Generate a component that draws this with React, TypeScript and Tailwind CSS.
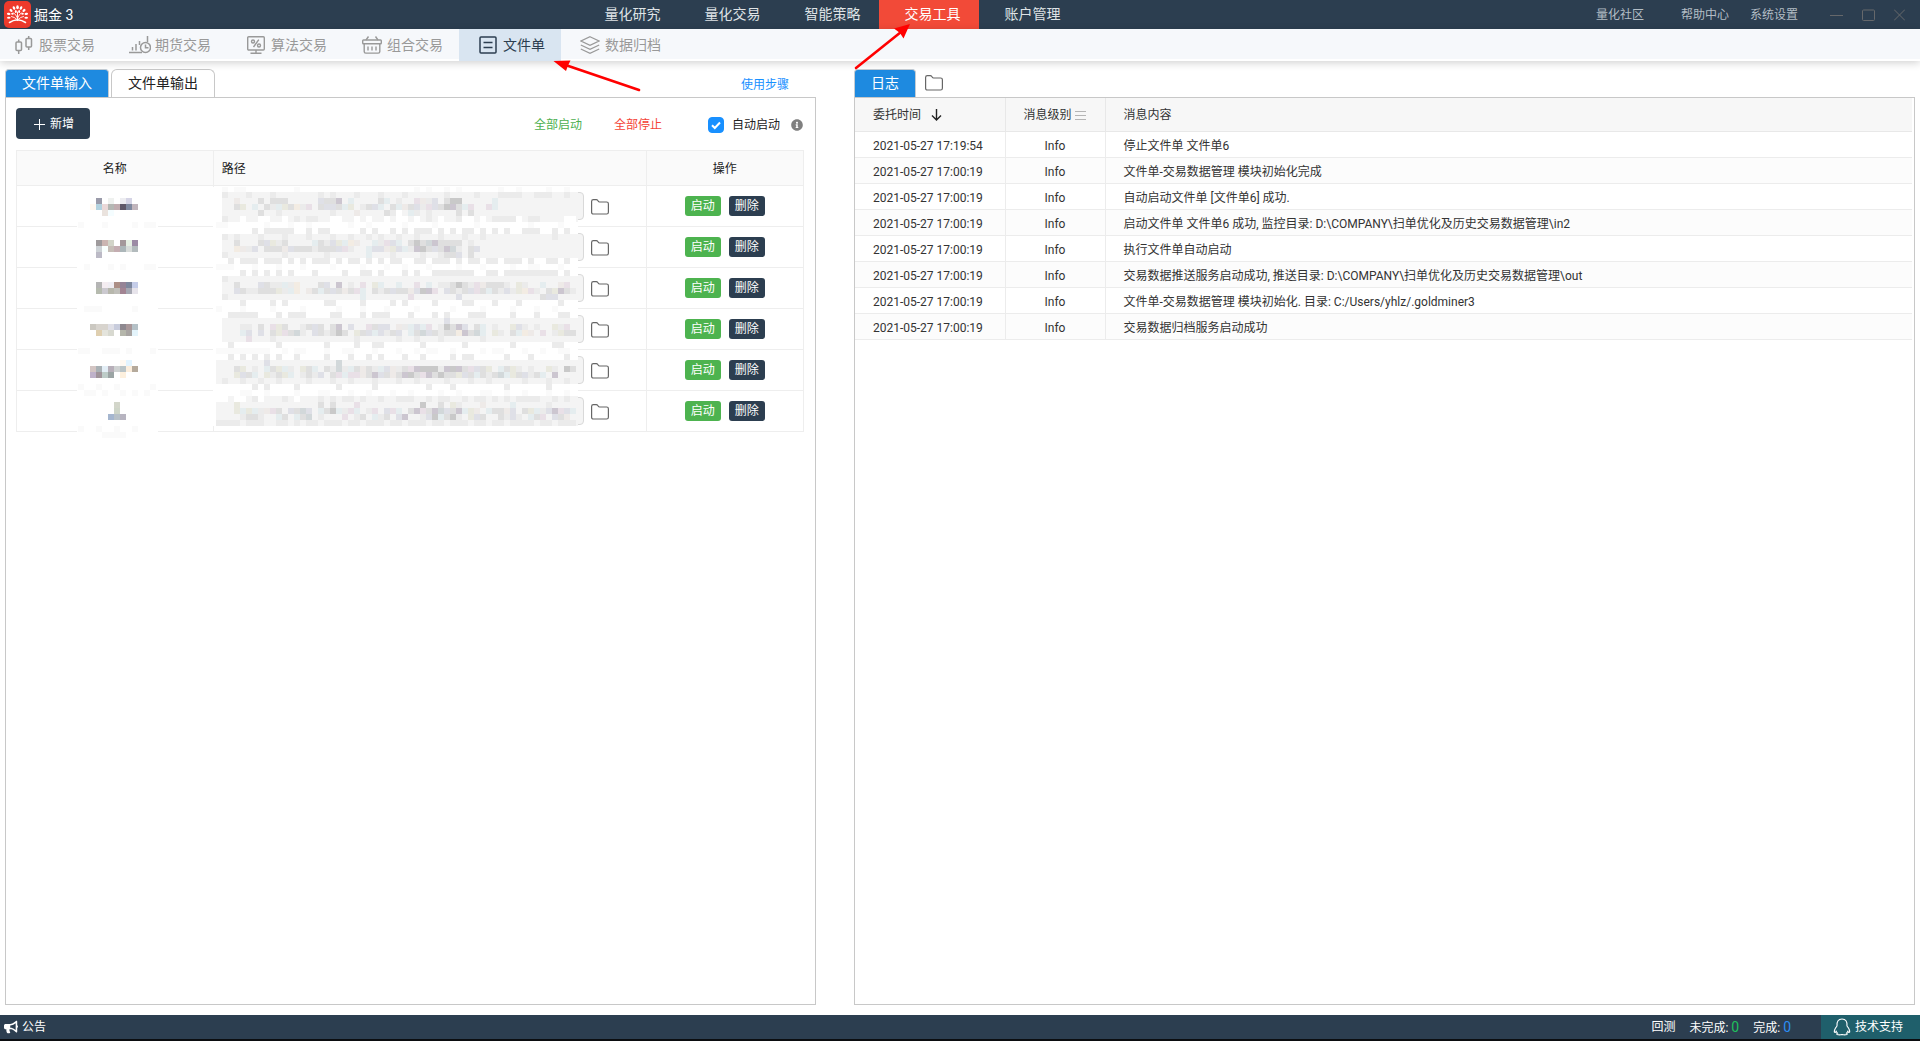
import React, { useState } from "react";
import { FaBullhorn, FaInfoCircle } from "react-icons/fa";

const MENU = ["量化研究", "量化交易", "智能策略", "交易工具", "账户管理"];

const LOGS = [
  { time: "2021-05-27 17:19:54", text: "停止文件单 文件单6" },
  { time: "2021-05-27 17:00:19", text: "文件单-交易数据管理 模块初始化完成" },
  { time: "2021-05-27 17:00:19", text: "自动启动文件单 [文件单6] 成功." },
  { time: "2021-05-27 17:00:19", text: "启动文件单 文件单6 成功, 监控目录: D:\\COMPANY\\扫单优化及历史交易数据管理\\in2" },
  { time: "2021-05-27 17:00:19", text: "执行文件单自动启动" },
  { time: "2021-05-27 17:00:19", text: "交易数据推送服务启动成功, 推送目录: D:\\COMPANY\\扫单优化及历史交易数据管理\\out" },
  { time: "2021-05-27 17:00:19", text: "文件单-交易数据管理 模块初始化. 目录: C:/Users/yhlz/.goldminer3" },
  { time: "2021-05-27 17:00:19", text: "交易数据归档服务启动成功" },
];

// Mosaic over the private names and paths, one character per 6px block
const COLORS: Record<string, string> = {
  w: "#ffffff",
  f: "#fafafa",
  l: "#ebebeb",
  m: "#dfdfdf",
  d: "#c9c9c9",
  k: "#ccc6d0",
  p: "#e9e0e7",
  e: "#dfe0e7",
  o: "#f3ece3",
  r: "#eeeae8",
  t: "#e5edef",
  y: "#e9e9df",
  c: "#d2d8da",
};

const PATH_MOSAIC = [
  ".f.ff........f...................f.f..f.f......f..f....f..f.",
  ".l...l...l.......l.l...l...l...l......l....l...llll..lll..l.",
  "...r...m.mmm.....emmk.t....mt.l..prle.mdd.....t.............",
  "w..my.t.mltymolp.meemty.lmet.mtrmelpemdkmtp..pt.............",
  ".......m..l........l...r....mlw.tl.l....m.m.................",
  ".l..w..ww..w.l.ll..ww..w.w..w.ww.w.l.w..lww.w.llllw.ll....ww",
  "ff......f...f..f......f..f.....f....f......f........f....f..",
  "......l.lllll..l.ll.....l.l..l.l.lll.l.l.ll.l.l.l..lll..l.l.",
  ".l.l...l...l...l...l..l..l.l..l..l...l...l..l...........l...",
  "...m...meylm....tmleytor..tlpet.mdmckmmmm.l.................",
  "...orle.mmmremmmlmmmepl..teeryetlkdmemkcl.me.................",
  ".l.........l......l......t...l....l..lmme.m.................",
  "..l.lll.lll.l.l.lll.l.ll.l.l.ll..ll.lll.l.ll.ll.lll.l..ll.l.",
  "fff...f...f...f....f....f...f..f...f....f...f....f..ff...f..",
  "....l.l.l.l.l...l....l..ll.l...l.l..lllllll..ll.lllllllll.l.",
  ".l..........................................................",
  "...m...emlltlo...me.k.l.p.yt..t..p.t.llmdmlprmmml.yl..t..rp.",
  "...emllmmmylto.rmtmemrmpt.mlmemmredkp.emlmepmtmlelyopl.mykml.",
  ".l......................t.......p.......e.............mee...",
  ".ww.l.ww.l.lww..w.ll.ww.l.ww.l.l.ww.l.ww.ll.w.lww.l.w.ww.l.w",
  "f...f....f....f.....f...f...f....f.....f....f....f...f..f...",
  "..lllll.w.l.lll.ww.ll.w.l.lll.w.l.w.l.l.w.lll.ww.l.w.l.w.ll.",
  "......................................e.....................",
  "....ll.m.pym..lmem.mk.e..pmee.rltetp.ldmke.mt.l..yel.l..ylp.",
  "....te.e.mypmcl.emlmdm.ymetelme.tmcemlmmokmct.yl.mtor.p.lymm",
  ".....p...l.............l......l..l...l......l...............",
  ".wl.www..wl.w..ww.l.ww.lw.ll.w.ww.l.w.ww.l.w.www.l.w.ww.ll.w",
  "fffffffff..f.ff...f..ff...f...f..f.ff..f....f.ff...f..f..ff.",
  "..l.lwl.l.lw.l.w..l.w.l..lwl.w.l..l.w..l.ll.w.w.l..wl..ww.l.",
  "........e...........c.......................................",
  "...my.l.tmytl.ymt.mlcltmrmlterlmpkdddlkdkmpemy.tmyl.l..yl.dm",
  "...yemt.ylmyt.lmle.mptpprmkemrmkdmpkmdmmyemtmlmctymelmt.k...",
  ".l..l..l..l....l...l..l...l...l..l....l...l..l.....l...l..l.",
  "w.w.wwl.l.w.wl.ww.w.lw.w.wl.w.w.w.wl.w.l.w.w.ww.l.w.ww.l.ww.",
  "....ff..f....f...ff...f..f...f..f....f..f...ff..f..f...f..f.",
  "ww.ww.lw...l.w...l.l.ll.l..l..lll..l.ll..l.ll.l.l.llll..l.l.",
  "...y.............m.m...p..........d..m.yl...r....t.....l....",
  "...ytytlrpm.emce.tmdtlpt.lp.ept.mkpmkcemktyr.tmmre.mytlekpet",
  "....lmml..tm.tmc.l...p.lm.tlm.ek..ledtmdl.yem..mlel.tmp.emr.",
  "llll.lll..ll.l.ll.lll.ll.lll.ll.lll.ll.lll.ll.ll.llll.ll.lll",
];

// [column, row, color]
const NAME_MOSAIC: [number, number, string][] = [
  [1, 2, "#9a9baa"], [3, 2, "#eff1ef"], [5, 2, "#ededf1"], [6, 2, "#d5d4e5"],
  [0, 3, "#fff8f0"], [1, 3, "#b3d2df"], [2, 3, "#ead8d8"], [3, 3, "#b4b7b3"], [4, 3, "#c0acaf"], [5, 3, "#5f5868"], [6, 3, "#7e889e"], [7, 3, "#c1b5bc"],
  [2, 4, "#eae3de"], [3, 4, "#f5fdff"],
  [1, 9, "#9e9a9c"], [2, 9, "#cbb5b1"], [3, 9, "#d2d4c8"], [5, 9, "#a4989b"], [6, 9, "#e6f0e4"], [7, 9, "#9c8ba5"],
  [1, 10, "#cdd2d6"], [2, 10, "#f9fffd"], [3, 10, "#c6beb7"], [4, 10, "#c4adb1"], [5, 10, "#acb6b9"], [6, 10, "#d8dcda"], [7, 10, "#b3bbbd"],
  [1, 11, "#bcbac6"],
  [1, 16, "#b5b5b5"], [2, 16, "#f4edf1"], [3, 16, "#efedf3"], [4, 16, "#ac8f86"], [5, 16, "#958396"], [6, 16, "#7d879d"], [7, 16, "#c5cde9"],
  [1, 17, "#b6bbaf"], [2, 17, "#cbc9cf"], [3, 17, "#b7b7ac"], [4, 17, "#c0bfba"], [5, 17, "#a28493"], [6, 17, "#a5a7b2"], [7, 17, "#e7e4eb"],
  [0, 23, "#cbc8c1"], [1, 23, "#d8d4ce"], [2, 23, "#d8d4ce"], [3, 23, "#dfdfe6"], [4, 23, "#c8ccdc"], [5, 23, "#8e888f"], [6, 23, "#a99799"], [7, 23, "#b5c1c7"],
  [1, 24, "#dfcfb0"], [2, 24, "#e4e4dc"], [3, 24, "#d8d9d0"], [5, 24, "#b5b6ab"], [6, 24, "#a8a4a2"], [7, 24, "#e4f4fb"],
  [5, 29, "#fff9f2"], [6, 29, "#e3f4ff"],
  [0, 30, "#d3c5c3"], [1, 30, "#a9b1b5"], [2, 30, "#e3eef6"], [3, 30, "#b7afb9"], [4, 30, "#cfd2d2"], [5, 30, "#bac4c7"], [6, 30, "#fceedd"], [7, 30, "#b5aa9c"],
  [0, 31, "#bfb2ca"], [1, 31, "#a0949a"], [2, 31, "#bdccc8"], [3, 31, "#9ba4a4"], [5, 31, "#fdf0de"],
  [4, 36, "#d3d6ca"], [4, 37, "#ced5c8"], [3, 38, "#a5b6cf"], [4, 38, "#b8c1c8"], [5, 38, "#b7b4c0"],
  [-2, 6, "#fafafa"], [2, 6, "#fafafa"], [7, 6, "#fafafa"], [9, 6, "#fafafa"], [10, 6, "#fafafa"],
  [-1, 13, "#fafafa"], [3, 13, "#fafafa"], [5, 13, "#fafafa"], [9, 13, "#fafafa"], [10, 13, "#fafafa"],
  [-1, 20, "#fafafa"], [0, 20, "#fafafa"], [1, 20, "#fafafa"], [7, 20, "#fafafa"],
  [-2, 27, "#fafafa"], [-1, 27, "#fafafa"], [2, 27, "#fafafa"], [3, 27, "#fafafa"], [4, 27, "#fafafa"], [6, 27, "#fafafa"], [10, 27, "#fafafa"],
  [-2, 33, "#fafafa"], [1, 33, "#fafafa"], [4, 33, "#fafafa"], [10, 33, "#fafafa"],
  [-1, 34, "#fafafa"], [0, 34, "#fafafa"], [2, 34, "#fafafa"], [5, 34, "#fafafa"], [7, 34, "#fafafa"], [9, 34, "#fafafa"],
  [-2, 40, "#fafafa"], [1, 40, "#fafafa"], [4, 40, "#fafafa"], [7, 40, "#fafafa"], [2, 41, "#fafafa"], [3, 41, "#fafafa"], [4, 41, "#fafafa"], [5, 41, "#fafafa"],
];

// filled bands behind the path blocks: [x, first row, rows]
const BANDS = [
  [206, 1, 5],
  [206, 8, 4],
  [206, 15, 4],
  [206, 22, 4],
  [200, 29, 4],
  [200, 35, 5],
];

const Mosaic = () => (
  <svg className="absolute left-0 top-0 pointer-events-none" width="600" height="292" shapeRendering="crispEdges" aria-hidden="true">
    <rect x="61" y="38" width="81" height="250" fill="#fff" />
    {NAME_MOSAIC.map(([c, r, color], i) => (
      <rect key={i} x={74 + c * 6} y={36 + r * 6} width="6" height="6" fill={color} />
    ))}
    <rect x="197" y="37" width="365" height="239" fill="#fff" />
    {BANDS.map(([x, r, n], i) => (
      <rect key={i} x={x} y={36 + r * 6} width={562 - x} height={n * 6} fill="#f4f4f4" />
    ))}
    {PATH_MOSAIC.map((line, r) =>
      line.split("").map((ch, c) =>
        ch === "." ? null : <rect key={`${r}-${c}`} x={200 + c * 6} y={r === 0 ? 37 : 36 + r * 6} width="6" height={r === 0 ? 5 : 6} fill={COLORS[ch]} />
      )
    )}
  </svg>
);

const FolderIcon = () => (
  <svg width="18" height="16" viewBox="0 0 18 16" fill="none" stroke="#666" strokeWidth="1.2">
    <path d="M.6 13.2V2.4Q.6.6 2.4.6h2.8q1 0 1.6.9l.5.8q.4.7 1.3.7h7q1.8 0 1.8 1.8v8.4q0 1.8-1.8 1.8H2.4q-1.8 0-1.8-1.8z" />
  </svg>
);

const Logo = () => (
  <svg width="27" height="27" viewBox="0 0 27 27">
    <rect width="27" height="27" rx="5" fill="#ee3a2b" />
    <g stroke="#fff" fill="none" strokeLinecap="round">
      <path d="M13.5 19V11M13.5 17Q12.5 14 9.8 12M13.5 17Q14.5 14 17.2 12M13 18.5Q10.5 16 7.5 15.5M14 18.5Q16.500 16 19.5 15.5" strokeWidth=".9" />
      <path d="M5.500 21.500Q10.500 18.500 13.5 19.200Q16.500 18.500 21.500 21.500" strokeWidth="1.5" />
    </g>
    <g fill="#fff">
      <ellipse cx="13.500" cy="6.200" rx="1.300" ry="2" />
      <ellipse cx="10" cy="7" rx="1.200" ry="1.900" transform="rotate(-25 10 7)" />
      <ellipse cx="17" cy="7" rx="1.200" ry="1.900" transform="rotate(25 17 7)" />
      <ellipse cx="7" cy="9.400" rx="1.200" ry="1.800" transform="rotate(-45 7 9.400)" />
      <ellipse cx="20" cy="9.400" rx="1.200" ry="1.800" transform="rotate(45 20 9.400)" />
      <ellipse cx="11.800" cy="10.600" rx="1" ry="1.500" />
      <ellipse cx="15.200" cy="10.600" rx="1" ry="1.500" />
      <ellipse cx="4.700" cy="12.900" rx="1.800" ry="1.100" transform="rotate(15 4.700 12.900)" />
      <ellipse cx="22.300" cy="12.900" rx="1.800" ry="1.100" transform="rotate(-15 22.300 12.900)" />
      <ellipse cx="8.500" cy="12.700" rx="1.300" ry="1" />
      <ellipse cx="18.500" cy="12.700" rx="1.300" ry="1" />
      <ellipse cx="4.800" cy="16.800" rx="1.800" ry="1" />
      <ellipse cx="22.200" cy="16.800" rx="1.800" ry="1" />
    </g>
  </svg>
);

const CandleIcon = () => (
  <svg width="18" height="18" viewBox="0 0 18 18" fill="none" stroke="currentColor" strokeWidth="1.5">
    <rect x="1" y="6" width="5.5" height="8.5" rx="1" />
    <path d="M3.700 3.500V6M3.700 14.500V18M13.700 0v2.500M13.700 11v3" />
    <rect x="11" y="2.5" width="5.5" height="8.5" rx="1" />
  </svg>
);

const FuturesIcon = () => (
  <svg width="22" height="18" viewBox="0 0 22 18" fill="none" stroke="currentColor" strokeWidth="1.5">
    <path d="M0 16.500h13M3.500 11v3.500M7 8v6.500M10.500 5v4M18.500 0v6" />
    <circle cx="16.5" cy="11.5" r="5" />
    <path d="M16.500 8.500v3.300h3" />
  </svg>
);

const AlgoIcon = () => (
  <svg width="18" height="18" viewBox="0 0 18 18" fill="none" stroke="currentColor" strokeWidth="1.4">
    <rect x=".7" y=".7" width="16.6" height="13.3" rx="1" />
    <path d="M9 14v3M3.500 17.200h11M11.800 3.700L6.500 11" />
    <circle cx="6" cy="5.5" r="1.5" />
    <circle cx="12" cy="9.5" r="1.5" />
  </svg>
);

const BasketIcon = () => (
  <svg width="20" height="18" viewBox="0 0 20 18" fill="none" stroke="currentColor" strokeWidth="1.4">
    <rect x=".7" y="4" width="18.6" height="3.8" rx=".8" />
    <path d="M2.200 8v7.500q0 1.600 1.600 1.600h12.400q1.600 0 1.600-1.600V8M6.500.5L4 4M13.500.5L16 4M6 10.500v4M10 10.500v4M14 10.500v4" />
  </svg>
);

const FileIcon = () => (
  <svg width="18" height="18" viewBox="0 0 18 18" fill="none" stroke="currentColor" strokeWidth="1.5">
    <rect x="1" y="1" width="16" height="16" rx="1" />
    <path d="M4.500 6.500h9M4.500 11.500h9" />
  </svg>
);

const LayersIcon = () => (
  <svg width="20" height="18" viewBox="0 0 20 18" fill="none" stroke="currentColor" strokeWidth="1.2">
    <path d="M10 .7L19 5l-9 4.300L1 5zM.8 9L10 13.300 19.200 9M.8 13L10 17.300 19.200 13" />
  </svg>
);

const QQIcon = () => (
  <svg width="18" height="18" viewBox="0 0 18 18" fill="none" stroke="#fff" strokeWidth="1.1">
    <path d="M4 8Q3.500 1 9 1t5 7q3 3.500 2.700 6-.8 1-2-.6-.3 1-1.200 1.700 1 .5.5 1.400-2.500.8-5 0-2.500.8-5 0-.5-.9.5-1.400Q3.600 14.400 3.300 13.400 2.100 15 1.300 14 1 11.500 4 8z" />
  </svg>
);

const TOOLS = [
  { name: "股票交易", icon: <CandleIcon /> },
  { name: "期货交易", icon: <FuturesIcon /> },
  { name: "算法交易", icon: <AlgoIcon /> },
  { name: "组合交易", icon: <BasketIcon /> },
  { name: "文件单", icon: <FileIcon /> },
  { name: "数据归档", icon: <LayersIcon /> },
];

const Header = () => (
  <header className="flex h-[29px] shrink-0 items-center bg-[#2c3e50] text-[#dfe3e6]">
    <div className="flex flex-[575] items-center gap-[3px] pl-1">
      <Logo />
      <span className="text-[14px] leading-5 text-white">掘金 3</span>
    </div>
    <nav className="flex h-full">
      {MENU.map((item) => (
        <a
          key={item}
          href="#"
          className={`flex w-[100px] items-center pl-[25px] text-[14px] ${item === "交易工具" ? "bg-[#f24a38] text-white" : ""}`}
        >
          {item}
        </a>
      ))}
    </nav>
    <div className="flex flex-[825] items-center justify-end pr-[15px] text-[12px] text-[#b3bdc5]">
      <a href="#" className="mr-[37px]">量化社区</a>
      <a href="#" className="mr-[21px]">帮助中心</a>
      <a href="#" className="mr-8">系统设置</a>
      <div className="flex items-center gap-[19px] text-[#66686b]">
        <button type="button" aria-label="最小化">
          <svg width="13" height="12" viewBox="0 0 13 12" stroke="currentColor"><path d="M0 6.500h13" /></svg>
        </button>
        <button type="button" aria-label="最大化">
          <svg width="13" height="12" viewBox="0 0 13 12" stroke="currentColor" fill="none"><rect x=".5" y="1" width="12" height="10.5" rx="1" /></svg>
        </button>
        <button type="button" aria-label="关闭">
          <svg width="11" height="12" viewBox="0 0 11 12" stroke="currentColor"><path d="M0 .5l11 11M11 .5l-11 11" /></svg>
        </button>
      </div>
    </div>
  </header>
);

const Toolbar = () => (
  <nav className="relative flex h-8 shrink-0 border-b-2 border-white bg-[#f6f8fb] shadow-[0_2px_8px_rgba(0,0,0,0.18)]">
    <div className="-mb-0.5 -ml-[5px] flex">
      {TOOLS.map((tool) => (
        <a
          key={tool.name}
          href="#"
          className={`flex items-center gap-1 pl-[18px] pr-4 text-[14px] ${tool.name === "文件单" ? "bg-[#d9e5f1] text-[#2c3e50]" : "text-[#999]"}`}
        >
          <span className="flex w-[22px] justify-center">{tool.icon}</span>
          {tool.name}
        </a>
      ))}
    </div>
  </nav>
);

const FilePanel = () => {
  const [autoStart, setAutoStart] = useState(true);

  return (
    <section className="flex flex-col">
      <div className="flex h-7 items-stretch gap-0.5 text-[14px]">
        <button type="button" className="rounded-t border border-b-0 border-[#c4ccd3] bg-[#1e8ae0] px-4 text-white">文件单输入</button>
        <button type="button" className="rounded-t-md border border-b-0 border-[#c8c8c8] bg-white px-4 text-[#222]">文件单输出</button>
        <a href="#" className="ml-auto mr-[27px] self-center pt-1 text-[12px] text-[#1890ff]">使用步骤</a>
      </div>
      <div className="flex-1 border border-[#c8c8c8] pl-2.5 pr-[11px] pt-2.5">
        <div className="flex items-center text-[12px]">
          <button type="button" className="flex h-[31px] w-[74px] items-center gap-[5px] rounded bg-[#2c3e50] pl-[18px] pt-px text-white">
            <svg width="11" height="11" viewBox="0 0 11 11" stroke="#fff"><path d="M0 5.500h11M5.500 0v11" /></svg>
            新增
          </button>
          <button type="button" className="ml-auto mr-8 pt-0.5 text-[#4caf50]">全部启动</button>
          <button type="button" className="mr-[46px] pt-0.5 text-[#f44336]">全部停止</button>
          <label className="relative mr-[11px] flex items-center gap-2 pt-0.5 text-[#222]">
            <input
              type="checkbox"
              checked={autoStart}
              onChange={(e) => setAutoStart(e.target.checked)}
              className="size-4 appearance-none rounded-sm border border-[#1890ff] checked:bg-[#1890ff]"
            />
            {autoStart && (
              <svg className="pointer-events-none absolute left-0 size-4" viewBox="0 0 16 16" fill="none" stroke="#fff" strokeWidth="2"><path d="M4 8.200l2.800 2.800L12 5.500" /></svg>
            )}
            自动启动
          </label>
          <FaInfoCircle className="mr-px mt-0.5 size-3 text-[#808080]" />
        </div>
        <div className="relative mt-[11px]">
          <table className="w-full table-fixed border-collapse border border-[#eee] text-[12px] text-[#222]">
            <colgroup>
              <col className="w-[25%]" />
              <col className="w-[55%]" />
              <col className="w-[20%]" />
            </colgroup>
            <thead>
              <tr className="h-[35px] bg-[#fafafa]">
                <th className="border border-[#eee] pt-0.5 font-normal">名称</th>
                <th className="border border-[#eee] pl-2 pt-0.5 text-left font-normal">路径</th>
                <th className="border border-[#eee] pt-0.5 font-normal">操作</th>
              </tr>
            </thead>
            <tbody>
              {[1, 2, 3, 4, 5, 6].map((n) => (
                <tr key={n} className="h-[41px]">
                  <td className="border border-[#eee]" />
                  <td className="border border-[#eee] py-0 pl-1">
                    <div className="flex items-center gap-[7px]">
                      <input type="text" disabled aria-label={`路径 ${n}`} className="h-7 w-[366px] rounded border border-[#d9d9d9] bg-[#f4f4f4]" />
                      <button type="button" aria-label="选择目录" className="pt-0.5"><FolderIcon /></button>
                    </div>
                  </td>
                  <td className="border border-[#eee] py-0">
                    <div className="flex justify-center gap-2 text-white">
                      <button type="button" className="h-5 w-9 rounded-[3px] bg-[#4db34f]">启动</button>
                      <button type="button" className="h-5 w-9 rounded-[3px] bg-[#2c3e50]">删除</button>
                    </div>
                  </td>
                </tr>
              ))}
            </tbody>
          </table>
          <Mosaic />
        </div>
      </div>
    </section>
  );
};

const LogPanel = () => (
  <section className="flex flex-col">
    <div className="flex h-7 items-stretch gap-[9px] text-[14px]">
      <button type="button" className="rounded-t border border-b-0 border-[#c4ccd3] bg-[#1e8ae0] px-4 text-white">日志</button>
      <button type="button" aria-label="打开日志目录"><FolderIcon /></button>
    </div>
    <div className="flex-1 border border-[#c8c8c8] pr-0.5">
      <table className="w-full table-fixed border-collapse text-left text-[12px] text-[#333]">
        <colgroup>
          <col className="w-[150px]" />
          <col className="w-[100px]" />
          <col />
        </colgroup>
        <thead>
          <tr className="h-[33px] border-b border-[#e8e8e8] bg-[#f7f7f7]">
            <th className="border-r border-[#e8e8e8] pl-[18px] pt-0.5 font-normal">
              <span className="flex items-center gap-2.5">
                委托时间
                <svg width="11" height="12" viewBox="0 0 11 12" fill="none" stroke="#222" strokeWidth="1.4"><path d="M5.500 0v11M1 6.500L5.500 11 10 6.500" /></svg>
              </span>
            </th>
            <th className="border-r border-[#e8e8e8] pl-[18px] pt-0.5 font-normal">
              <span className="flex items-center gap-[3px]">
                消息级别
                <svg width="11" height="9" viewBox="0 0 11 9" stroke="#b5b5b5"><path d="M0 .5h11M0 4.500h11M0 8.500h11" /></svg>
              </span>
            </th>
            <th className="pl-[18px] pt-0.5 font-normal">消息内容</th>
          </tr>
        </thead>
        <tbody>
          {LOGS.map((log, i) => (
            <tr key={i} className="h-[26px] border-b border-[#ececec] even:bg-[#fcfcfc]">
              <td className="border-r border-[#ececec] pb-0 pl-[18px] pt-1">{log.time}</td>
              <td className="border-r border-[#ececec] pt-1 text-center">Info</td>
              <td className="truncate pb-0 pl-[18px] pt-1">{log.text}</td>
            </tr>
          ))}
        </tbody>
      </table>
    </div>
  </section>
);

const Footer = () => (
  <footer className="flex h-[26px] shrink-0 items-stretch border-b-2 border-[#0b0d10] bg-[#2c3e50] text-[12px] text-white">
    <div className="flex items-center gap-1 pl-1">
      <FaBullhorn className="size-3.5" />
      公告
    </div>
    <div className="ml-auto mr-[30px] flex items-center gap-3.5">
      <span>回测</span>
      <span>未完成: <span className="text-[14px] text-[#1fc15c]">0</span></span>
      <span>完成: <span className="text-[14px] text-[#2b8df5]">0</span></span>
    </div>
    <button type="button" className="flex w-[99px] items-center gap-1 bg-[#1f5f6b] pl-3">
      <QQIcon />
      技术支持
    </button>
  </footer>
);

// red pointers to the active menu and the active tool
const Arrows = () => (
  <svg className="pointer-events-none absolute left-0 top-0" width="960" height="100" aria-hidden="true">
    <g stroke="#f00" strokeWidth="2.6" strokeLinecap="round">
      <path d="M856 68L901 32" />
      <path d="M639 90L567 65.500" />
    </g>
    <g fill="#f00">
      <path d="M910 24L903.500 38.500L900 33L894 28.500z" />
      <path d="M553.500 61L570.500 60.500L568 65.500L566 71z" />
    </g>
  </svg>
);

const App: React.FC = () => {
  return (
    <div className="relative flex h-screen flex-col bg-white font-['Roboto','Noto_Sans_CJK_SC',sans-serif]">
      <Header />
      <Toolbar />
      <main className="grid flex-1 grid-cols-[811fr_1061fr] gap-[38px] px-[5px] pb-2.5 pt-2">
        <FilePanel />
        <LogPanel />
      </main>
      <Footer />
      <Arrows />
    </div>
  );
};

export default App;
